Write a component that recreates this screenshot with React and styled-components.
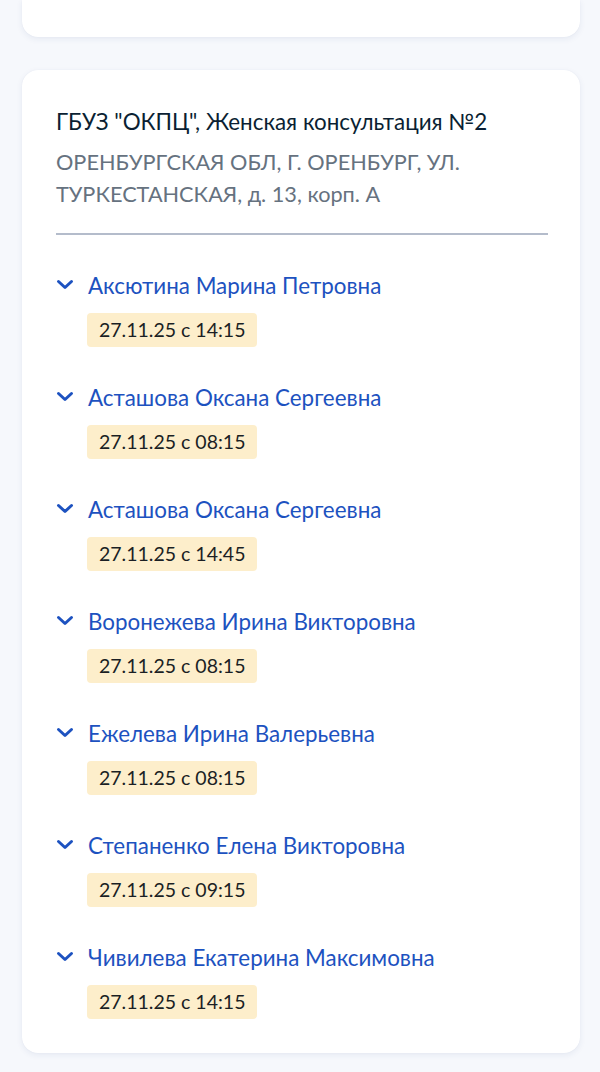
import React from 'react';
import styled, { createGlobalStyle } from 'styled-components';

const GlobalStyle = createGlobalStyle`
  html, body {
    margin: 0;
    padding: 0;
    background: #f6f8fc;
    font-family: Lato, "Noto Sans", sans-serif;
  }
  * { box-sizing: border-box; }
`;

const Page = styled.div`
  width: 600px;
  padding: 0 20px 24px 22px;
  display: flex;
  flex-direction: column;
  gap: 33px;
`;

const Card = styled.div`
  background: #fff;
  border-radius: ${p => (p.$cut ? '0 0 16px 16px' : '16px')};
  box-shadow: 0 2px 6px rgba(40, 70, 130, 0.08), 0 0 1px rgba(40, 70, 130, 0.08);
  height: ${p => (p.$cut ? '37px' : 'auto')};
  padding: ${p => (p.$cut ? '0' : '36px 32px 34px 34px')};
`;

const Title = styled.div`
  font-size: 22.4px;
  line-height: 32px;
  color: #0b1f33;
  margin-bottom: 8px;
`;

const Address = styled.div`
  font-size: 21.7px;
  line-height: 32px;
  color: #66727f;
`;

const Divider = styled.hr`
  border: none;
  height: 1.5px;
  background: #b4bccb;
  margin: 23px 0 37px;
`;

const List = styled.div`
  display: flex;
  flex-direction: column;
  gap: 37px;
`;

const Item = styled.div`
  display: grid;
  grid-template-columns: 32px 1fr;
  grid-template-rows: 28px 34px;
  row-gap: 13px;
  align-items: center;
`;

const Chevron = styled.svg`
  width: 18px;
  height: 11px;
  margin-left: 0;
  margin-top: -3px;
`;

const Name = styled.a`
  font-size: 22.4px;
  line-height: 28px;
  color: #1d52c0;
  text-decoration: none;
  cursor: pointer;
`;

const Badge = styled.span`
  grid-column: 2;
  justify-self: start;
  background: #fdeecb;
  color: #1b1f24;
  font-size: 19.5px;
  line-height: 34px;
  height: 34px;
  padding: 0 12px;
  border-radius: 4px;
  margin-left: -1px;
`;

const doctors = [
  ['Аксютина Марина Петровна', '27.11.25 с 14:15'],
  ['Асташова Оксана Сергеевна', '27.11.25 с 08:15'],
  ['Асташова Оксана Сергеевна', '27.11.25 с 14:45'],
  ['Воронежева Ирина Викторовна', '27.11.25 с 08:15'],
  ['Ежелева Ирина Валерьевна', '27.11.25 с 08:15'],
  ['Степаненко Елена Викторовна', '27.11.25 с 09:15'],
  ['Чивилева Екатерина Максимовна', '27.11.25 с 14:15'],
];

export default function App() {
  return (
    <>
      <GlobalStyle />
      <Page>
        <Card $cut />
        <Card>
          <Title>ГБУЗ "ОКПЦ", Женская консультация №2</Title>
          <Address>
            ОРЕНБУРГСКАЯ ОБЛ, Г. ОРЕНБУРГ, УЛ.
            <br />
            ТУРКЕСТАНСКАЯ, д. 13, корп. А
          </Address>
          <Divider />
          <List>
            {doctors.map(([name, time], i) => (
              <Item key={i}>
                <Chevron viewBox="0 0 18 11" fill="none">
                  <path d="M2.5 2.5L9 8.5l6.5-6" stroke="#1d52c0" strokeWidth="3" strokeLinecap="round" strokeLinejoin="round" />
                </Chevron>
                <Name>{name}</Name>
                <Badge>{time}</Badge>
              </Item>
            ))}
          </List>
        </Card>
      </Page>
    </>
  );
}
